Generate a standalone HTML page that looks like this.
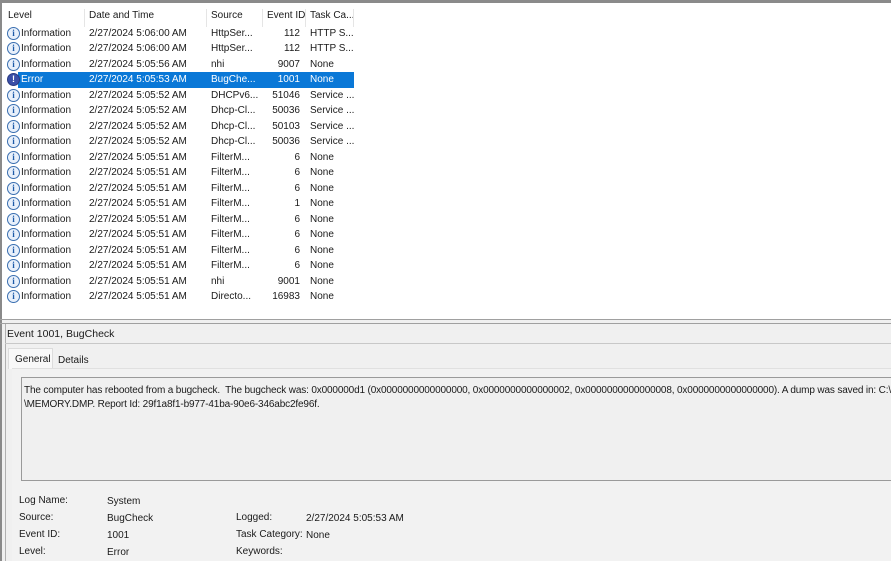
<!DOCTYPE html>
<html><head><style>
*{margin:0;padding:0;box-sizing:border-box}
body{width:891px;height:561px;overflow:hidden;background:#f0f0f0;font-family:"Liberation Sans",sans-serif;font-size:10px;color:#1a1a1a;position:relative}
.abs{position:absolute;white-space:nowrap}
#top{left:0;top:0;width:891px;height:3px;background:#8a8a8a}
#list{left:2px;top:3px;width:889px;height:316px;background:#fff;overflow:hidden}
.sep{position:absolute;top:6px;width:1px;height:18px;background:#e5e5e5}
.row{position:absolute;left:0;width:360px;height:15.5px}
.row span{position:absolute;top:2px}
.sel{background:#0a78d7;color:#fff}
.ic{position:absolute;left:5px;top:1px;width:13px;height:13px;border-radius:50%;border:1px solid #3a6fb0;background:#e8f0fb;font:bold 9px "Liberation Serif",serif;color:#1d5aa8;text-align:center;line-height:11px}
.er{background:#3a4fa8;border-color:#2a3a80;color:#fff;font-family:"Liberation Sans";line-height:11px}
</style></head><body>
<div class="abs" id="top"></div>
<div class="abs" style="left:0;top:0;width:2px;height:561px;background:#8a8a8a"></div>
<div class="abs" id="list">
<span class="abs" style="left:6px;top:7px">Level</span>
<span class="abs" style="left:87px;top:7px">Date and Time</span>
<span class="abs" style="left:209px;top:7px">Source</span>
<span class="abs" style="left:265px;top:7px">Event ID</span>
<span class="abs" style="left:308px;top:7px">Task Ca...</span>
<div class="sep" style="left:82px"></div><div class="sep" style="left:204px"></div><div class="sep" style="left:260px"></div><div class="sep" style="left:303px"></div><div class="sep" style="left:351px"></div>
<div id="rows"></div>
</div>
<div class="abs" style="left:0;top:319px;width:891px;height:1px;background:#a0a0a0"></div>
<div class="abs" style="left:0;top:323px;width:891px;height:1px;background:#a0a0a0"></div>
<div class="abs" style="left:5px;top:324px;width:1px;height:237px;background:#b0b0b0"></div>
<span class="abs" style="left:7px;top:328px;font-size:10.5px">Event 1001, BugCheck</span>
<div class="abs" style="left:5px;top:343px;width:886px;height:1px;background:#c8c8c8"></div>
<div class="abs" style="left:8px;top:348px;width:45px;height:21px;background:#f8f8f8;border:1px solid #dcdcdc;border-bottom:none"></div>
<span class="abs" style="left:15px;top:354px">General</span>
<span class="abs" style="left:58px;top:355px">Details</span>
<div class="abs" style="left:12px;top:368px;width:879px;height:193px;background:#f2f2f2;border-top:1px solid #e0e0e0"></div>
<div class="abs" style="left:21px;top:377px;width:870px;height:104px;border:1px solid #9a9a9a;border-right:none;background:#f0f0f0;overflow:hidden">
<span class="abs" style="left:2px;top:7px;letter-spacing:-0.15px">The computer has rebooted from a bugcheck.&nbsp; The bugcheck was: 0x000000d1 (0x0000000000000000, 0x0000000000000002, 0x0000000000000008, 0x0000000000000000). A dump was saved in: C:\Windows</span>
<span class="abs" style="left:2px;top:21px;letter-spacing:-0.15px">\MEMORY.DMP. Report Id: 29f1a8f1-b977-41ba-90e6-346abc2fe96f.</span>
</div>
<span class="abs" style="left:19px;top:495px">Log Name:</span><span class="abs" style="left:107px;top:496px">System</span>
<span class="abs" style="left:19px;top:512px">Source:</span><span class="abs" style="left:107px;top:513px">BugCheck</span>
<span class="abs" style="left:236px;top:512px">Logged:</span><span class="abs" style="left:306px;top:513px">2/27/2024 5:05:53 AM</span>
<span class="abs" style="left:19px;top:529px">Event ID:</span><span class="abs" style="left:107px;top:530px">1001</span>
<span class="abs" style="left:236px;top:529px">Task Category:</span><span class="abs" style="left:306px;top:530px">None</span>
<span class="abs" style="left:19px;top:546px">Level:</span><span class="abs" style="left:107px;top:547px">Error</span>
<span class="abs" style="left:236px;top:546px">Keywords:</span>
<script>
var d=[["Information","2/27/2024 5:06:00 AM","HttpSer...","112","HTTP S..."],["Information","2/27/2024 5:06:00 AM","HttpSer...","112","HTTP S..."],["Information","2/27/2024 5:05:56 AM","nhi","9007","None"],["Error","2/27/2024 5:05:53 AM","BugChe...","1001","None"],["Information","2/27/2024 5:05:52 AM","DHCPv6...","51046","Service ..."],["Information","2/27/2024 5:05:52 AM","Dhcp-Cl...","50036","Service ..."],["Information","2/27/2024 5:05:52 AM","Dhcp-Cl...","50103","Service ..."],["Information","2/27/2024 5:05:52 AM","Dhcp-Cl...","50036","Service ..."]];
var f=[6,6,6,1,6,6,6,6];f.forEach(function(x){d.push(["Information","2/27/2024 5:05:51 AM","FilterM...",""+x,"None"])});
d.push(["Information","2/27/2024 5:05:51 AM","nhi","9001","None"]);d.push(["Information","2/27/2024 5:05:51 AM","Directo...","16983","None"]);
var h="";d.forEach(function(r,i){var t=22.5+i*15.5;var e=r[0]=="Error";var c=e?';color:#fff':'';
h+='<div class="row" style="top:'+t+'px">'+(e?'<div class="sel" style="position:absolute;left:16px;top:0;width:336px;height:15.5px"></div>':'')+
'<div class="ic'+(e?' er':'')+'">'+(e?'!':'i')+'</div><span style="left:19px'+c+'">'+r[0]+'</span><span style="left:87px'+c+'">'+r[1]+'</span><span style="left:209px'+c+'">'+r[2]+'</span><span style="right:62px;text-align:right'+c+'">'+r[3]+'</span><span style="left:308px'+c+'">'+r[4]+'</span></div>'});
document.getElementById("rows").innerHTML=h;
</script>
</body></html>
